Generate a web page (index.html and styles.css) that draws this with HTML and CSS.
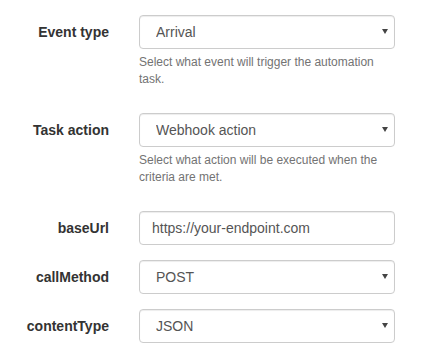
FILE: index.html
```html
<!DOCTYPE html>
<html lang="en">
<head>
    <meta charset="UTF-8">
    <meta name="viewport" content="width=device-width, initial-scale=1.0">
    <title>Automation task</title>
    <link rel="stylesheet" href="styles.css">
</head>
<body>
    <form class="form-horizontal">
        <div class="form-group">
            <label class="control-label">Event type</label>
            <div class="control-col">
                <div class="select-wrap">
                    <select class="form-control">
                        <option>Arrival</option>
                    </select>
                </div>
                <span class="help-block">Select what event will trigger the automation task.</span>
            </div>
        </div>

        <div class="form-group">
            <label class="control-label">Task action</label>
            <div class="control-col">
                <div class="select-wrap">
                    <select class="form-control">
                        <option>Webhook action</option>
                    </select>
                </div>
                <span class="help-block">Select what action will be executed when the criteria are met.</span>
            </div>
        </div>

        <div class="form-group">
            <label class="control-label">baseUrl</label>
            <div class="control-col">
                <input class="form-control" type="text" value="https://your-endpoint.com">
            </div>
        </div>

        <div class="form-group">
            <label class="control-label">callMethod</label>
            <div class="control-col">
                <div class="select-wrap">
                    <select class="form-control">
                        <option>POST</option>
                    </select>
                </div>
            </div>
        </div>

        <div class="form-group">
            <label class="control-label">contentType</label>
            <div class="control-col">
                <div class="select-wrap">
                    <select class="form-control">
                        <option>JSON</option>
                    </select>
                </div>
            </div>
        </div>
    </form>
</body>
</html>
```

FILE: styles.css
```css
/* page */
body {
    margin: 0;
    padding-top: 15px;
    background-color: #fff;
    font-family: "Liberation Sans", Arial, sans-serif;
    font-size: 14px;
    line-height: 20px;
    color: #333;
}

/* one row: label + control */
.form-group {
    display: flex;
    margin-bottom: 15px;
}

.control-label {
    width: 124px;
    box-sizing: border-box;
    padding-right: 15px;
    padding-top: 7px;
    text-align: right;
    font-weight: bold;
    color: #333;
}

.control-col {
    width: 256px;
    margin-left: 15px;
}

/* inputs and selects */
.form-control {
    display: block;
    width: 100%;
    height: 34px;
    box-sizing: border-box;
    padding: 6px 12px;
    border: 1px solid #ccc;
    border-radius: 4px;
    box-shadow: inset 0 1px 1px rgba(0, 0, 0, 0.075);
    background-color: #fff;
    font-family: "Liberation Sans", Arial, sans-serif;
    font-size: 14px;
    line-height: 20px;
    color: #555;
    outline: none;
}

select.form-control {
    -webkit-appearance: none;
    appearance: none;
    padding-left: 16px;
}

/* little dropdown caret */
.select-wrap {
    position: relative;
}

.select-wrap::after {
    content: "";
    position: absolute;
    top: 14px;
    right: 7px;
    border-left: 3px solid transparent;
    border-right: 3px solid transparent;
    border-top: 5px solid #444;
    pointer-events: none;
}

/* help text under a control */
.help-block {
    display: block;
    margin-top: 5px;
    margin-bottom: 10px;
    font-size: 12px;
    line-height: 17px;
    color: #737373;
}
```
